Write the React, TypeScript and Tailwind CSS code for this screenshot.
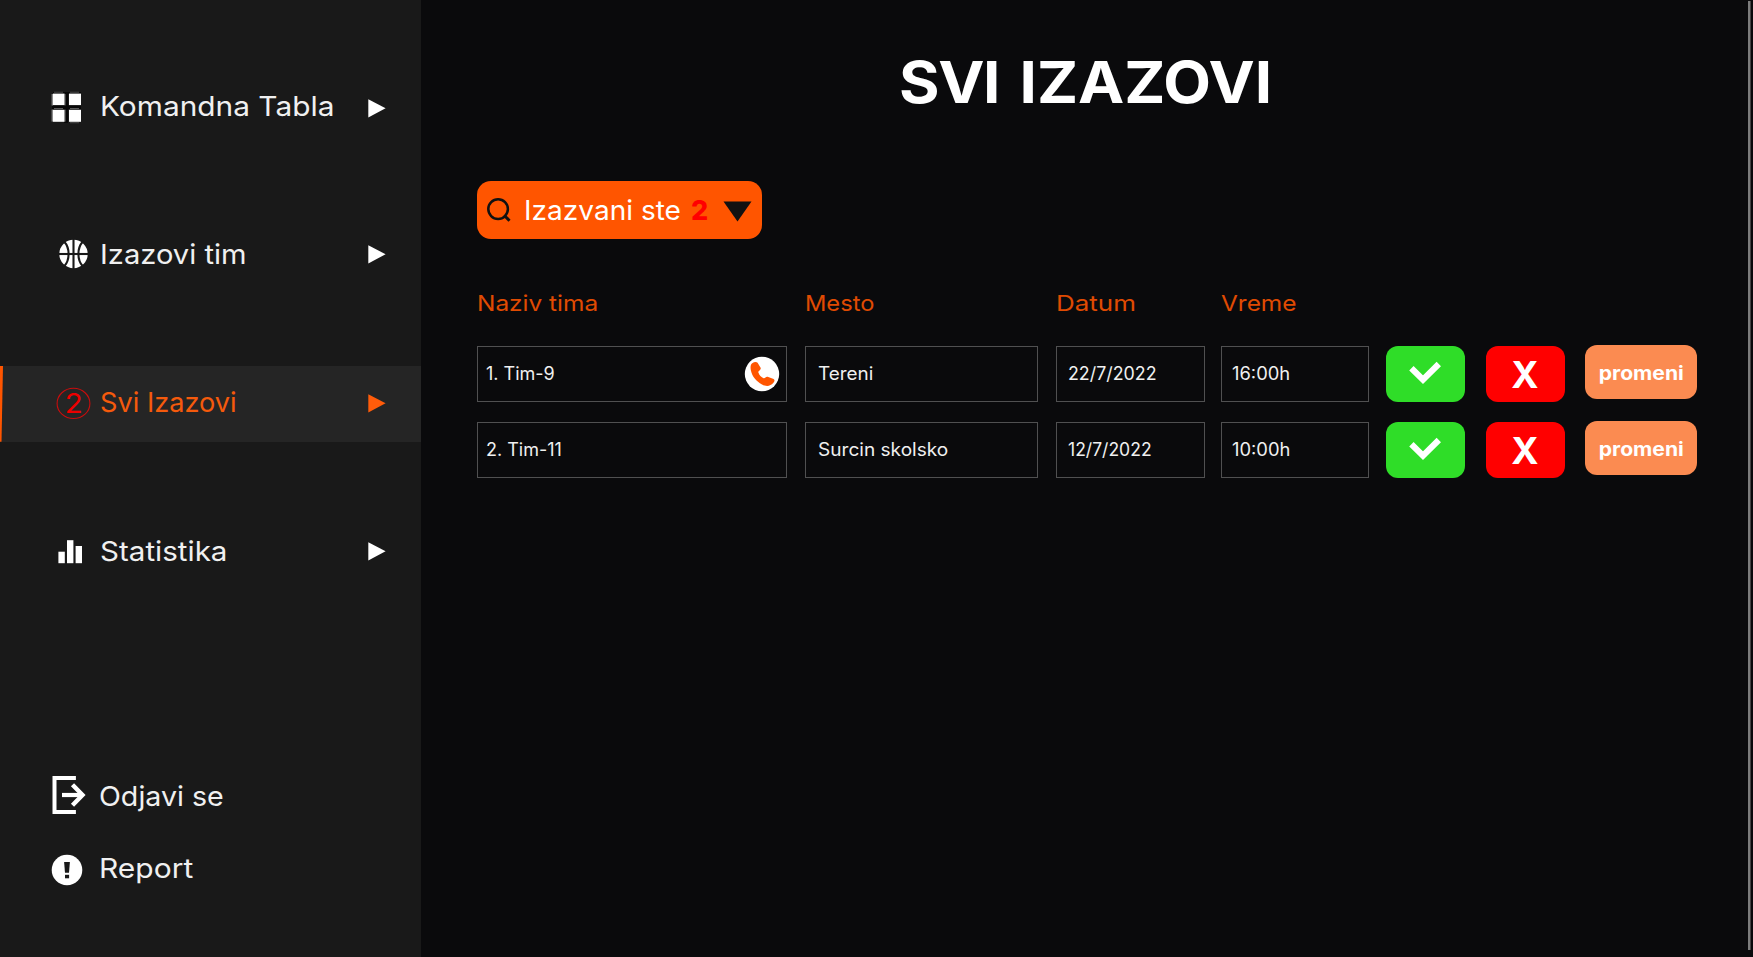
import type { ReactNode } from "react";

function Label({ className = "", children }: { className?: string; children: ReactNode }) {
  return <span className={`block origin-left whitespace-nowrap ${className}`}>{children}</span>;
}

function GridIcon() {
  return (
    <svg width="34" height="34" viewBox="0 0 34 34" className="block">
      <g fill="#070707">
        <rect x="14" y="2" width="4" height="30" />
        <rect x="2" y="14.2" width="29" height="4" />
        <rect x="3" y="1" width="28" height="2" />
      </g>
      <g fill="#8b8b8b">
        <rect x="1.6" y="3" width="1.4" height="11.5" />
        <rect x="1.6" y="18.6" width="1.4" height="12" />
        <rect x="14.4" y="3" width="1.4" height="11.5" opacity="0.5" />
        <rect x="14.4" y="18.6" width="1.4" height="12" opacity="0.5" />
        <rect x="4" y="0.8" width="9" height="0.8" opacity="0.6" />
        <rect x="20" y="0.8" width="9" height="0.8" opacity="0.6" />
        <rect x="4" y="17.2" width="9" height="0.8" opacity="0.8" />
        <rect x="20" y="17.2" width="9" height="0.8" opacity="0.8" />
        <rect x="20" y="31.4" width="9" height="0.8" opacity="0.6" />
      </g>
      <g fill="#fff">
        <rect x="3" y="2.6" width="11.5" height="11.5" />
        <rect x="19" y="2.6" width="12" height="11.5" />
        <rect x="3" y="18.8" width="11.5" height="12" />
        <rect x="19" y="18.8" width="12" height="12" />
      </g>
    </svg>
  );
}

function BallIcon() {
  return (
    <svg width="30" height="30" viewBox="0 0 30 30" className="block">
      <circle cx="15.5" cy="15" r="14.2" fill="#fff" />
      <g stroke="#191919" strokeWidth="2.1" fill="none">
        <path d="M15.5 0V30" />
        <path d="M0 15H30" />
        <path d="M6.1 2.5C12.1 9 12.1 21 6.1 27.5" />
        <path d="M24.9 2.5C18.9 9 18.9 21 24.9 27.5" />
      </g>
    </svg>
  );
}

function CountBadge() {
  return (
    <svg width="36" height="34" viewBox="0 0 36 34" className="block">
      <ellipse cx="17.5" cy="17.4" rx="16.4" ry="15.1" fill="none" stroke="#c80d0d" strokeWidth="1.1" />
      <text x="17.8" y="26.5" textAnchor="middle" textLength="18" lengthAdjust="spacingAndGlyphs" fill="#ee0000" fontFamily="Inter" fontSize="27">
        2
      </text>
    </svg>
  );
}

function BarsIcon() {
  return (
    <svg width="26" height="26" viewBox="0 0 26 26" className="block" fill="#fff">
      <rect x="1.4" y="12.7" width="6.4" height="11.5" />
      <rect x="10" y="1.2" width="6.4" height="23" />
      <rect x="18.6" y="7" width="6.4" height="17.2" />
    </svg>
  );
}

function LogoutIcon() {
  return (
    <svg width="34" height="38" viewBox="0 0 34 38" className="block" fill="none" stroke="#fff">
      <path d="M23.9 2H2.5V36H23.9" strokeWidth="4" />
      <path d="M10 19H29.5" strokeWidth="4.2" />
      <path d="M20.5 8.8L30.5 19L20.5 29.2" strokeWidth="4.4" />
    </svg>
  );
}

function ReportIcon() {
  return (
    <svg width="32" height="32" viewBox="0 0 32 32" className="block">
      <circle cx="16" cy="16" r="15.3" fill="#fff" />
      <path d="M13.1 8H18.9L18 18.8H14Z" fill="#191919" />
      <rect x="14" y="20.8" width="4.1" height="3.5" fill="#191919" />
    </svg>
  );
}

function Arrow({ className }: { className: string }) {
  return (
    <svg width="18" height="19" viewBox="0 0 18 19" className={`block ${className}`} fill="currentColor">
      <path d="M0.3 0.3L17.6 9.3L0.3 18.4Z" />
    </svg>
  );
}

function Check() {
  return (
    <svg width="34" height="24" viewBox="0 0 34 24" className="block">
      <path d="M2.4 7.2L14 18.6L29.8 3" fill="none" stroke="#fff" strokeWidth="6.2" />
    </svg>
  );
}

function PhoneBadge() {
  return (
    <svg width="36" height="36" viewBox="0 0 36 36" className="block">
      <circle cx="18" cy="18" r="17.2" fill="#fff" />
      <path
        d="M8.2 7.2C10.2 5.7 12.6 5.6 13.6 6.8L16.6 11.8C17.5 13.6 14.1 15 14.3 16.2C15 18.9 17.4 21.2 19.6 22.2C21.2 22.6 21.8 20.3 23.6 20.8L29.6 22.9C31.1 23.7 30.6 25.6 29.2 27.1C26.6 30.2 22.4 30.9 18 28.5C12.4 25.6 8 20.3 6.9 14.6C6.3 11.4 6.3 8.8 8.2 7.2Z"
        fill="#ff5500"
      />
    </svg>
  );
}

type NavItem = { label: string; text: string; lead: string; icon: ReactNode; active?: boolean; arrow: string };

const nav: NavItem[] = [
  { label: "Komandna Tabla", text: "-mt-0.5 scale-x-[1.085]", lead: "pl-[50px] pt-px", icon: <GridIcon />, arrow: "mt-0.5" },
  { label: "Izazovi tim", text: "-mt-0.5 scale-x-[1.06]", lead: "pl-[58px] -mt-[3px]", icon: <BallIcon />, arrow: "-mt-0.5" },
  { label: "Svi Izazovi", text: "-mt-[3px] scale-x-[0.988]", lead: "pl-[56px] -mt-0.5", icon: <CountBadge />, active: true, arrow: "-mt-px" },
  { label: "Statistika", text: "-mt-0.5 scale-x-[1.075]", lead: "pl-[57px]", icon: <BarsIcon />, arrow: "-mt-0.5" },
];

const headers = [
  { label: "Naziv tima", cell: "w-[328px]", text: "scale-x-[1.11]" },
  { label: "Mesto", cell: "w-[251px]", text: "scale-x-[1.075]" },
  { label: "Datum", cell: "w-[165px]", text: "scale-x-[1.18]" },
  { label: "Vreme", cell: "w-[150px]", text: "scale-x-[1.11]" },
];

const rows = [
  { team: "1. Tim-9", place: "Tereni", date: "22/7/2022", time: "16:00h", phone: true, p: "scale-x-[1.05]", d: "scale-x-[0.99]" },
  { team: "2. Tim-11", place: "Surcin skolsko", date: "12/7/2022", time: "10:00h", phone: false, p: "scale-x-[1.06]", d: "scale-x-[0.975]" },
];

const box = "flex h-14 shrink-0 items-center border border-[#505051]";

export default function App() {
  return (
    <div className="flex h-[957px] w-[1753px] overflow-hidden bg-[#0a0a0c] font-['Inter',sans-serif] text-[#f0f0f0]">
      <aside className="flex w-[421px] shrink-0 flex-col bg-[#191919] text-[27.5px] leading-9">
        <nav className="flex flex-col gap-[72.4px] pt-[69px]">
          {nav.map((n) => (
            <div key={n.label} className={`flex h-[76px] items-center ${n.active ? "bg-[#252525] text-[#f55a0c]" : ""}`}>
              <div className="h-full w-0">
                {n.active && <div className="h-full w-[3px] bg-[#ff5500] [clip-path:polygon(0_0,100%_0,50%_100%,0_100%)]" />}
              </div>
              <div className={`w-[100px] shrink-0 ${n.lead}`}>{n.icon}</div>
              <div className="w-[268px] shrink-0">
                <Label className={n.text}>{n.label}</Label>
              </div>
              <Arrow className={n.active ? `text-[#ff5c0a] ${n.arrow}` : `text-white ${n.arrow}`} />
            </div>
          ))}
        </nav>
        <div className="mt-[186px] flex h-[38px] items-center">
          <div className="w-[99px] shrink-0 pl-[52px]">
            <LogoutIcon />
          </div>
          <Label className="mt-0.5 scale-x-[1.04]">Odjavi se</Label>
        </div>
        <div className="mt-[40px] flex h-8 items-center">
          <div className="w-[99px] shrink-0 pl-[50.5px]">
            <ReportIcon />
          </div>
          <Label className="-mt-[5px] scale-x-[1.09]">Report</Label>
        </div>
      </aside>

      <main className="flex w-[1327px] shrink-0 flex-col pl-14">
        <h1 className="mt-[46px] h-[70px] pr-[53px] text-center text-[58px] font-bold leading-[72px] text-white">
          <span className="inline-block origin-center scale-x-[1.068] whitespace-nowrap">
            <span className="tracking-[-1.4px] [word-spacing:7px]">SVI </span>IZAZOVI
          </span>
        </h1>

        <button className="mt-[65px] flex h-[58px] w-[285px] shrink-0 items-center rounded-[14px] bg-[#ff5500] pl-[9px] text-left">
          <svg width="26" height="26" viewBox="0 0 26 26" className="block" fill="none" stroke="#111">
            <circle cx="12.1" cy="12.1" r="9.8" strokeWidth="2.5" />
            <path d="M18.1 18.3L23.5 23.7" strokeWidth="3" />
          </svg>
          <span className="ml-[12px] block w-[167px] text-[27.5px] leading-9 text-white">
            <Label className="scale-x-[1.02]">Izazvani ste</Label>
          </span>
          <span className="mt-0.5 w-8 text-[27px] font-extrabold leading-9 text-[#ff0000]">2</span>
          <svg width="29" height="21" viewBox="0 0 29 21" className="mt-[3px] block">
            <path d="M0.5 0.5H28.5L14.5 20.5Z" fill="#111" />
          </svg>
        </button>

        <div className="mt-[48px] flex h-8 text-[22px] leading-8 text-[#e04b02]">
          {headers.map((h) => (
            <div key={h.label} className={`shrink-0 ${h.cell}`}>
              <Label className={h.text}>{h.label}</Label>
            </div>
          ))}
        </div>

        <div className="mt-[27px] flex flex-col gap-5 text-lg leading-7">
          {rows.map((r) => (
            <div key={r.team} className="flex h-14">
              <div className={`${box} w-[310px] justify-between pl-[8px] pr-1.5`}>
                <Label>{r.team}</Label>
                {r.phone && <PhoneBadge />}
              </div>
              <div className={`${box} ml-[18px] w-[233px] pl-3`}>
                <Label className={r.p}>{r.place}</Label>
              </div>
              <div className={`${box} ml-[18px] w-[149px] pl-[11px]`}>
                <Label className={r.d}>{r.date}</Label>
              </div>
              <div className={`${box} ml-[16px] w-[148px] pl-[10px]`}>
                <Label className="scale-x-[1.02]">{r.time}</Label>
              </div>
              <button className="ml-[17px] flex h-[56px] w-[79px] shrink-0 items-center justify-center rounded-[12px] bg-[#2fdd28] pb-[3px]">
                <Check />
              </button>
              <button className="ml-[20.5px] flex h-[56px] w-[79px] shrink-0 items-center justify-center rounded-[12px] bg-[#ff0000] text-[37px] font-bold leading-none text-white">
                X
              </button>
              <button className="-mt-px ml-[20.5px] flex h-[54px] w-[112px] shrink-0 items-center justify-center rounded-[12px] bg-[#fb8b51] pt-[3px] text-[19px] font-bold text-white">
                <span className="block origin-center scale-x-[1.11]">promeni</span>
              </button>
            </div>
          ))}
        </div>
      </main>

      <div className="mt-px h-[949px] w-[3px] shrink-0 border-r border-[#444] bg-[#7c7c7c]" />
    </div>
  );
}
